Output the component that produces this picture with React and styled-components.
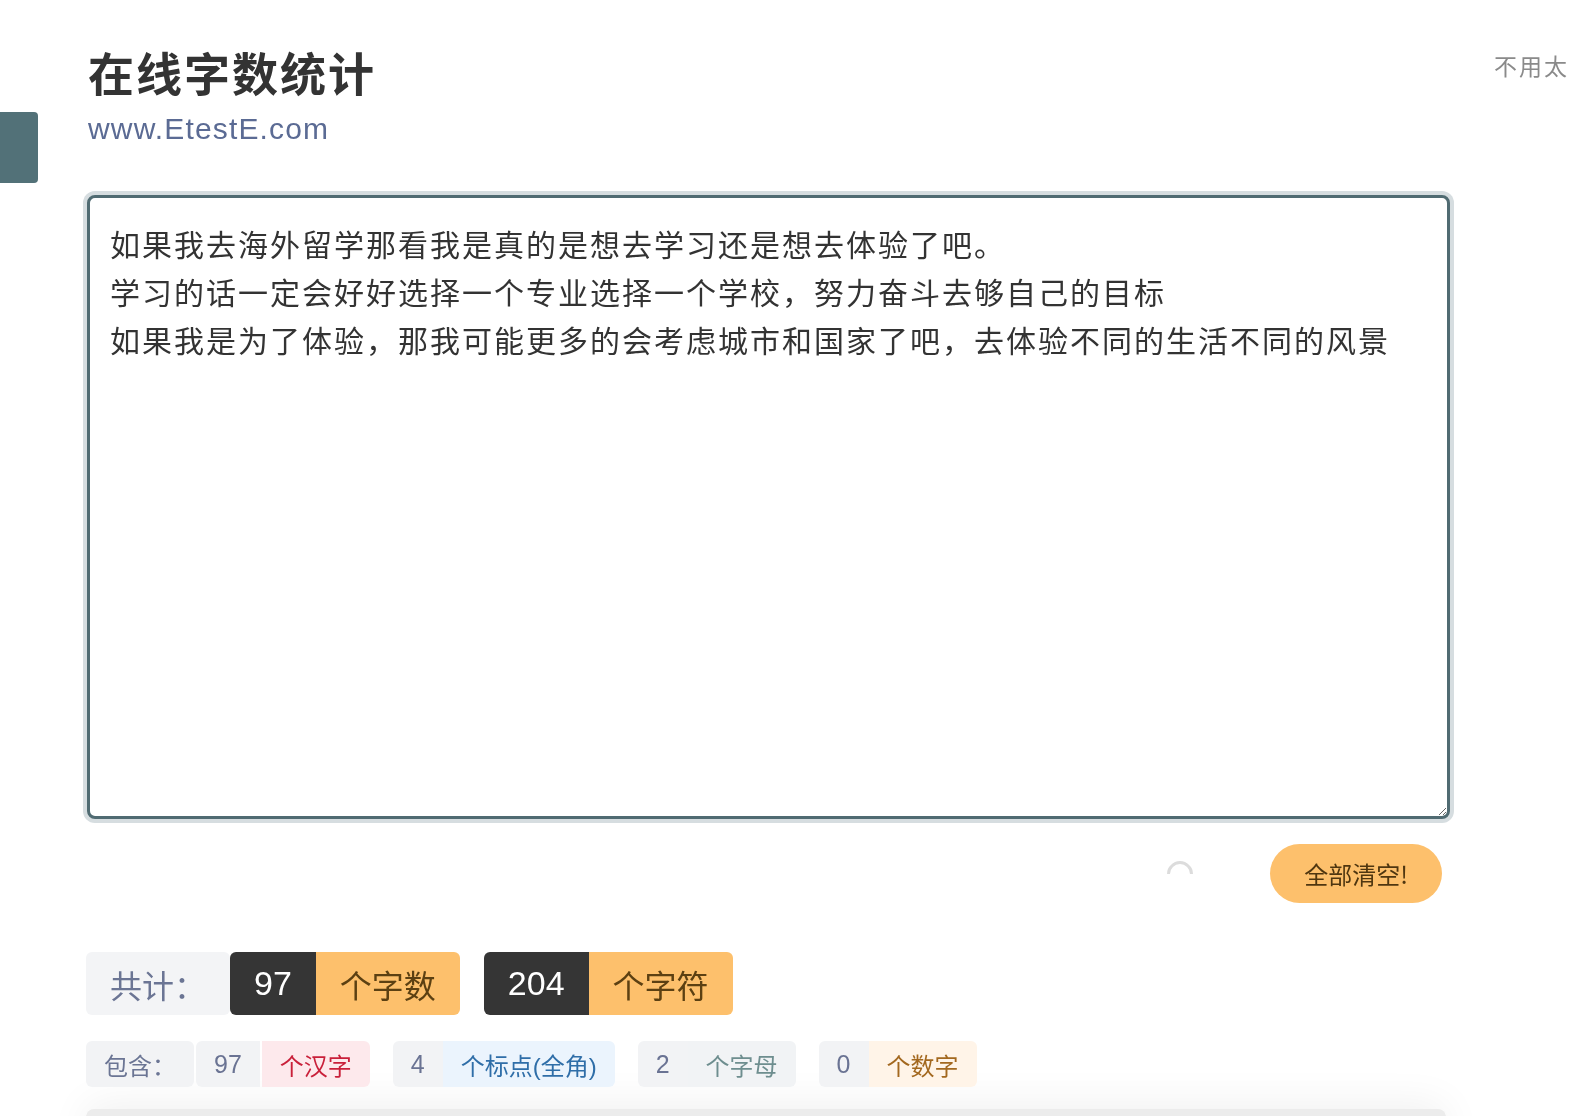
import React from "react";
import styled, { createGlobalStyle } from "styled-components";

const Global = createGlobalStyle`
  html, body { margin: 0; padding: 0; background: #fff; overflow: hidden; }
  body { font-family: "Liberation Sans", "Noto Sans CJK SC", sans-serif; }
  * { box-sizing: border-box; }
`;

const SideTab = styled.div`
  position: fixed;
  left: 0;
  top: 112px;
  width: 38px;
  height: 71px;
  background: #527178;
  border-radius: 0 4px 4px 0;
`;

const Page = styled.div`
  width: 1572px;
  height: 1116px;
  padding: 43px 0 0 87px;
  overflow: hidden;
  position: relative;
`;

const Header = styled.header`
  display: grid;
  grid-template-columns: 1fr 78px;
`;

const TitleBlock = styled.div`
  display: flex;
  flex-direction: column;
  gap: 10px;
`;

const Title = styled.h1`
  margin: 0 0 0 1px;
  font-family: "Noto Sans CJK SC", sans-serif;
  font-weight: 700;
  font-size: 46px;
  letter-spacing: 2px;
  line-height: 56px;
  color: #333;
`;

const Site = styled.div`
  font-family: "Liberation Sans", "Noto Sans CJK SC", sans-serif;
  font-size: 30px;
  letter-spacing: 1.15px;
  line-height: 40px;
  color: #5b6b94;
  margin-left: 1px;
`;

const Notice = styled.div`
  margin-top: 7px;
  font-family: "Noto Sans CJK SC", sans-serif;
  font-size: 23px;
  letter-spacing: 2px;
  line-height: 30px;
  color: #8a8a8a;
  white-space: nowrap;
`;

const Editor = styled.textarea`
  display: block;
  margin-top: 46px;
  width: 1363px;
  height: 624px;
  border: 3px solid #506b72;
  border-radius: 8px;
  box-shadow: 0 0 0 4px #d6dde0;
  padding: 21px 20px;
  font-family: "Noto Sans CJK SC", sans-serif;
  font-size: 30px;
  letter-spacing: 2px;
  line-height: 48px;
  color: #333;
  outline: none;
  resize: vertical;
  background: #fff;
`;

const ActionRow = styled.div`
  width: 1363px;
  margin-top: 25px;
  padding-right: 8px;
  display: flex;
  justify-content: flex-end;
  align-items: center;
  gap: 77px;
`;

const Spinner = styled.div`
  width: 26px;
  height: 26px;
  border-radius: 50%;
  border: 3px solid transparent;
  border-top-color: #dcdcdc;
  border-right-color: #dcdcdc;
  transform: rotate(-45deg);
`;

const ClearButton = styled.button`
  height: 59px;
  padding: 0 34px;
  border: none;
  border-radius: 30px;
  background: #fdc06c;
  color: #4f3610;
  font-family: "Noto Sans CJK SC", sans-serif;
  font-size: 24px;
  cursor: pointer;
`;

const TotalRow = styled.div`
  margin-top: 49px;
  margin-left: -1px;
  display: flex;
  gap: 24px;
`;

const Group = styled.div`
  display: flex;
  gap: ${(p) => p.$gap || 0}px;
`;

const Cell = styled.div`
  height: ${(p) => (p.$big ? 63 : 46)}px;
  padding: 0 ${(p) => (p.$big ? 24 : 18)}px;
  display: flex;
  align-items: center;
  font-family: "Liberation Sans", "Noto Sans CJK SC", sans-serif;
  font-size: ${(p) => (p.$big ? (p.$num ? 34 : 32) : p.$num ? 25 : 24)}px;
  background: ${(p) => p.$bg};
  color: ${(p) => p.$fg};
  border-radius: ${(p) => p.$radius};
  white-space: nowrap;
`;

const DetailRow = styled.div`
  margin-top: 26px;
  margin-left: -1px;
  display: flex;
  gap: 23px;
`;

const BottomCard = styled.div`
  margin-top: 22px;
  margin-left: -1px;
  width: 1360px;
  height: 60px;
  background: #ececec;
  border-radius: 8px 8px 0 0;
  box-shadow: 0 -6px 40px rgba(0, 0, 0, 0.06);
`;

const text =
  "如果我去海外留学那看我是真的是想去学习还是想去体验了吧。\n学习的话一定会好好选择一个专业选择一个学校，努力奋斗去够自己的目标\n如果我是为了体验，那我可能更多的会考虑城市和国家了吧，去体验不同的生活不同的风景";

const details = [
  { n: "97", label: "个汉字", bg: "#fde9ec", fg: "#c9203a" },
  { n: "4", label: "个标点(全角)", bg: "#ebf4fd", fg: "#2f6ea8" },
  { n: "2", label: "个字母", bg: "#f1f3f5", fg: "#6e8e8f" },
  { n: "0", label: "个数字", bg: "#fff4e8", fg: "#a3681f" },
];

export default function App() {
  return (
    <>
      <Global />
      <SideTab />
      <Page>
        <Header>
          <TitleBlock>
            <Title>在线字数统计</Title>
            <Site>www.EtestE.com</Site>
          </TitleBlock>
          <Notice>不用太</Notice>
        </Header>
        <Editor defaultValue={text} spellCheck={false} />
        <ActionRow>
          <Spinner />
          <ClearButton>全部清空!</ClearButton>
        </ActionRow>
        <TotalRow>
          <Group>
            <Cell $big $bg="#f3f4f6" $fg="#6b7594" $radius="6px">共计：</Cell>
            <Cell $big $num $bg="#353535" $fg="#fff" $radius="6px 0 0 6px">97</Cell>
            <Cell $big $bg="#fdc06c" $fg="#5c4012" $radius="0 6px 6px 0">个字数</Cell>
          </Group>
          <Group>
            <Cell $big $num $bg="#353535" $fg="#fff" $radius="6px 0 0 6px">204</Cell>
            <Cell $big $bg="#fdc06c" $fg="#5c4012" $radius="0 6px 6px 0">个字符</Cell>
          </Group>
        </TotalRow>
        <DetailRow>
          {details.map((d, i) => (
            <Group key={d.label} $gap={i === 0 ? 2 : 0}>
              {i === 0 && (
                <Cell $bg="#f2f3f5" $fg="#6b7594" $radius="6px">包含：</Cell>
              )}
              <Cell $num $bg="#f2f3f5" $fg="#6a7393" $radius="6px 0 0 6px">{d.n}</Cell>
              <Cell $bg={d.bg} $fg={d.fg} $radius="0 6px 6px 0">{d.label}</Cell>
            </Group>
          ))}
        </DetailRow>
        <BottomCard />
      </Page>
    </>
  );
}
